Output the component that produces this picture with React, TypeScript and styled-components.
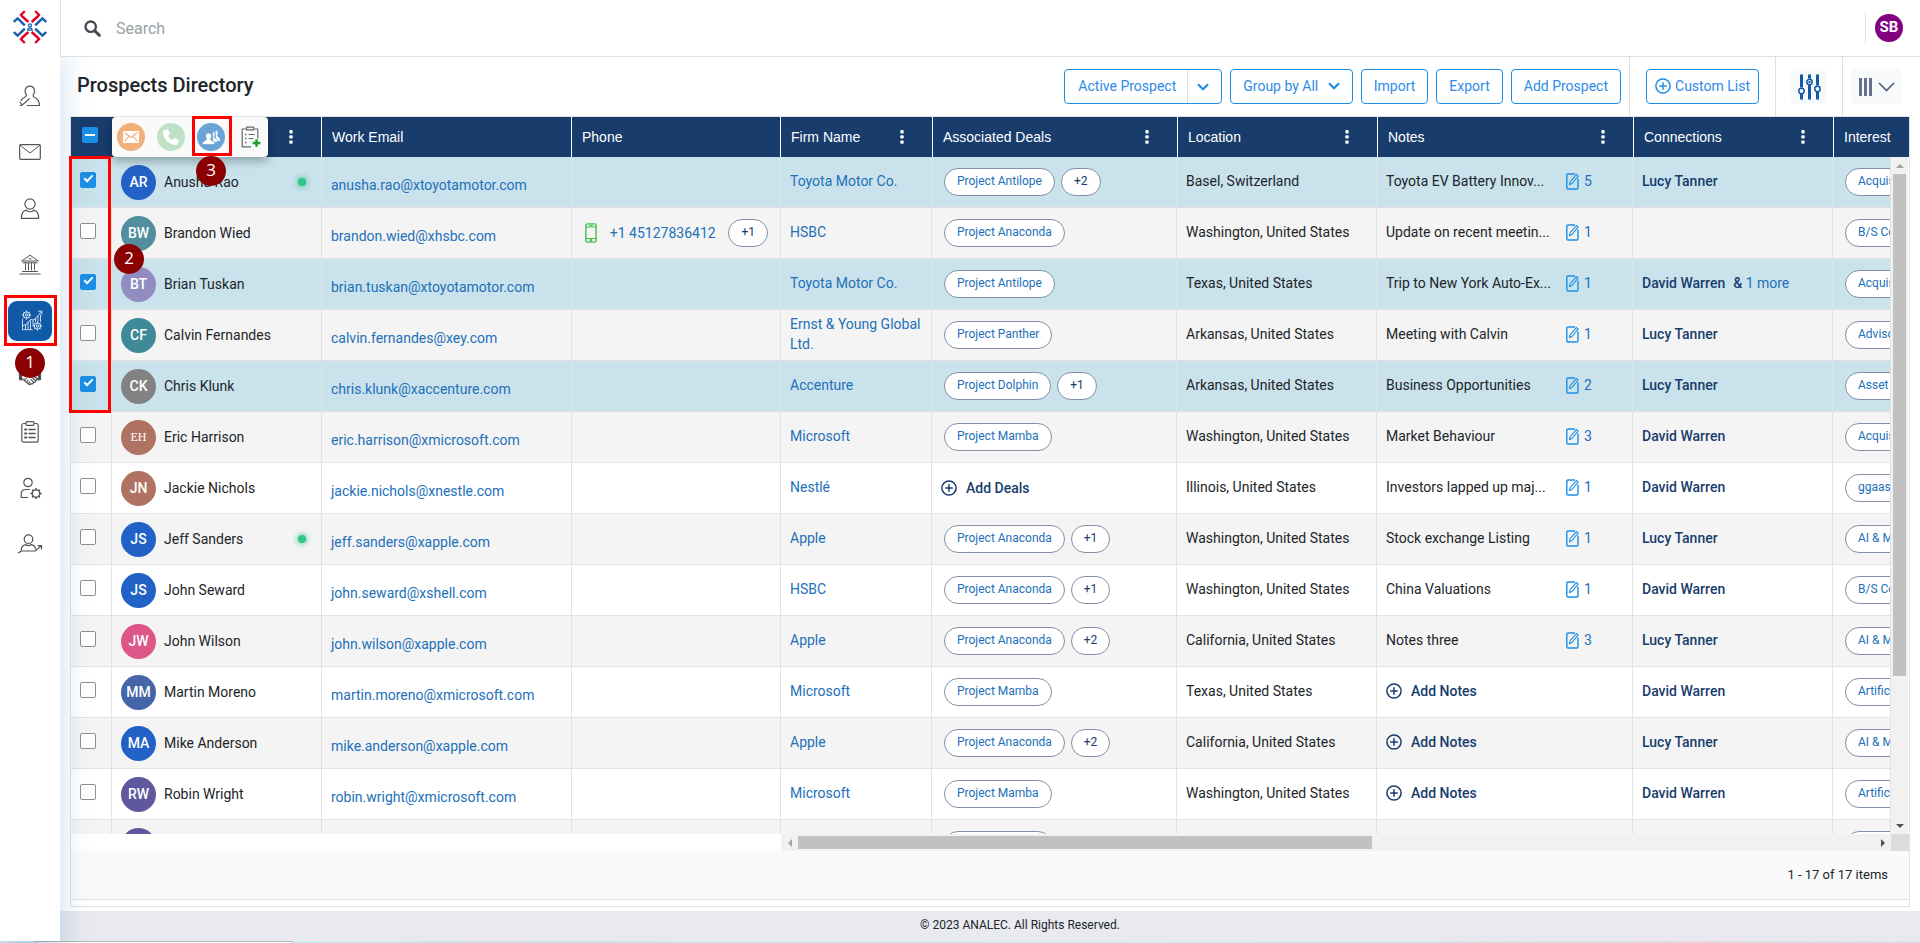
import React from "react";
import styled, { createGlobalStyle, css } from "styled-components";

const GlobalStyle = createGlobalStyle`
  *, *::before, *::after { box-sizing: border-box; }
  body {
    margin: 0;
    font-family: Roboto, "Liberation Sans", sans-serif;
    font-size: 14px;
    line-height: 20px;
    color: #212529;
    background: #fff;
  }
  button, input { font: inherit; color: inherit; margin: 0; }
  button { cursor: pointer; background: none; border: 0; padding: 0; }
  a { text-decoration: none; color: inherit; }
  svg { display: block; flex: none; }
`;

/* ---------- shell ---------- */

const Shell = styled.div`
  position: relative;
  display: flex;
  flex-direction: column;
  height: 100vh;
  overflow: hidden;
`;

const Body = styled.div`
  flex: 1;
  min-height: 0;
  display: flex;
`;

const Sidebar = styled.nav`
  position: relative;
  z-index: 2;
  flex: none;
  width: 60px;
  background: #fff;
  display: flex;
  flex-direction: column;
  align-items: center;
  box-shadow: 0 54px 32px rgba(60, 130, 190, 0.28);
`;

const Brand = styled.a`
  display: flex;
  align-items: center;
  justify-content: center;
  width: 60px;
  height: 54px;
`;

const NavList = styled.ul`
  list-style: none;
  margin: 0;
  padding: 14px 0 0;
  display: flex;
  flex-direction: column;
`;

const NavItem = styled.li`
  position: relative;
  height: 56px;
  display: flex;
  align-items: center;
  justify-content: center;
`;

const NavLink = styled.a<{ $active?: boolean }>`
  display: flex;
  align-items: center;
  justify-content: center;
  width: 44px;
  height: 40px;
  border-radius: 9px;
  ${(p) => p.$active && css`
    margin-top: 2px;
    padding: 0 0 2px 4px;
    background: #115aa8;
  `}
`;

const Content = styled.div`
  flex: 1;
  min-width: 0;
  display: flex;
  flex-direction: column;
`;

const TopBar = styled.header`
  position: relative;
  z-index: 3;
  flex: none;
  height: 57px;
  display: flex;
  align-items: center;
  justify-content: space-between;
  background: #fff;
  border-bottom: 1px solid #dcdfe4;
  border-left: 1px solid #dcdfe4;
  padding: 0 17px 0 23px;
`;

const SearchBox = styled.label`
  display: flex;
  align-items: center;
  gap: 15px;
  color: #495057;
`;

const SearchInput = styled.input`
  width: 400px;
  height: 40px;
  padding: 0;
  border: 0;
  outline: none;
  font-size: 16px;
  &::placeholder { color: #9aa0a6; opacity: 1; }
`;

const UserArea = styled.div`
  display: flex;
  align-items: center;
  height: 30px;
  padding-left: 9px;
  border-left: 1px solid #dcdfe4;
`;

const UserButton = styled.button`
  width: 28px;
  height: 28px;
  border-radius: 50%;
  background: #800080;
  color: #fff;
  font-size: 15px;
  font-weight: 700;
  line-height: 26px;
  padding-bottom: 2px;
`;

/* ---------- page toolbar ---------- */

const PageBar = styled.div`
  flex: none;
  display: flex;
  align-items: stretch;
  height: 59px;
  margin-left: 17px;
`;

const Title = styled.h1`
  flex: 1;
  margin: 0;
  font-size: 20px;
  font-weight: 500;
  line-height: 56px;
`;

const BarGroup = styled.div<{ $pad: string }>`
  display: flex;
  align-items: center;
  gap: 8px;
  padding: ${(p) => p.$pad};
  & + & { border-left: 1px solid #dcdfe4; }
`;

const OutlineButton = styled.button`
  display: flex;
  align-items: center;
  gap: 6px;
  height: 35px;
  padding: 0 12px 2px;
  border: 1px solid #1b8fe6;
  border-radius: 4px;
  color: #2e8be6;
  white-space: nowrap;
`;

const CustomListButton = styled(OutlineButton)`
  gap: 4px;
  padding: 0 8px 2px;
`;

const SplitButton = styled.div`
  display: flex;
  height: 35px;
  border: 1px solid #1b8fe6;
  border-radius: 4px;
  color: #2e8be6;
`;

const SplitMain = styled.button`
  padding: 0 11px 2px 13px;
  white-space: nowrap;
`;

const SplitArrow = styled.button`
  width: 34px;
  display: flex;
  align-items: center;
  justify-content: center;
  padding-right: 4px;
  border-left: 1px solid #dcdfe4;
`;

const SoftButton = styled.button<{ $w: number }>`
  display: flex;
  align-items: center;
  justify-content: center;
  gap: 6px;
  width: ${(p) => p.$w}px;
  height: 35px;
  border-radius: 4px;
  background: #f8f9fa;
`;

/* ---------- grid ---------- */

const GridPanel = styled.section`
  flex: 1;
  min-height: 0;
  display: flex;
  flex-direction: column;
  margin: 0 10px 4px;
  border: 1px solid #e3e3e3;
  padding-bottom: 6px;
`;

const GridArea = styled.div`
  flex: 1;
  min-height: 0;
  display: flex;
`;

const GridMain = styled.div`
  flex: 1;
  min-width: 0;
  display: flex;
  flex-direction: column;
`;

const TableClip = styled.div`
  flex: 1;
  min-height: 0;
  overflow: hidden;
`;

const Table = styled.table`
  width: 100%;
  table-layout: fixed;
  border-collapse: separate;
  border-spacing: 0;
`;

const HeadCell = styled.th<{ $side?: "left" | "right" | "none"; $flush?: boolean }>`
  height: 40px;
  padding: ${(p) => (p.$flush ? "0" : "0 24px 0 10px")};
  background: #183c6c;
  color: #fff;
  font-family: "Liberation Sans", Arial, sans-serif;
  font-weight: 400;
  text-align: left;
  white-space: nowrap;
  overflow: hidden;
  ${(p) => p.$side === "left" && css`border-left: 1px solid #fff;`}
  ${(p) => p.$side === "right" && css`border-right: 1px solid #fff;`}
`;

const BulkCell = styled(HeadCell)`
  position: relative;
  overflow: visible;
`;

const HeadInner = styled.div`
  display: flex;
  align-items: center;
  justify-content: space-between;
`;

const DotsButton = styled.button`
  width: 12px;
  height: 20px;
  display: flex;
  align-items: center;
  justify-content: center;
`;

const BulkHead = styled.div`
  display: flex;
  align-items: center;
  justify-content: space-between;
  padding-right: 24px;
`;

const BulkBar = styled.div`
  display: flex;
  align-items: center;
  gap: 12px;
  width: 156px;
  height: 40px;
  padding-left: 5px;
  background: #fafafa;
  border-radius: 4px;
  box-shadow: 0 4px 10px rgba(0, 0, 0, 0.3);
`;

const BulkButton = styled.button<{ $bg?: string }>`
  display: flex;
  align-items: center;
  justify-content: center;
  width: 28px;
  height: 28px;
  border-radius: 50%;
  background: ${(p) => p.$bg ?? "transparent"};
`;

const Row = styled.tr<{ $tone: "selected" | "gray" | "white" }>`
  background: ${(p) => ({ selected: "#c9e2eb", gray: "#f4f4f4", white: "#fff" })[p.$tone]};
`;

const Cell = styled.td`
  height: 51px;
  padding: 0 9px;
  border-right: 1px solid #e0e2e4;
  border-bottom: 1px solid #e0e2e4;
  overflow: hidden;
  white-space: nowrap;
`;

const CheckCell = styled(Cell)`
  padding: 0 0 4px 9px;
`;

const EmailCell = styled(Cell)`
  padding-top: 6px;
`;

const TextCell = styled(Cell)`
  padding-bottom: 2px;
`;

const FirmCell = styled(TextCell)`
  white-space: normal;
`;

const Checkbox = styled.input`
  appearance: none;
  display: block;
  position: relative;
  width: 16px;
  height: 16px;
  border: 1px solid #8f8f8f;
  border-radius: 2px;
  background: #fff;
  &:checked, &:indeterminate { background: #1b8fe6; border-color: #1b8fe6; }
  &:checked::after {
    content: "";
    position: absolute;
    left: 3px;
    top: 2px;
    width: 9px;
    height: 5px;
    border: solid #fff;
    border-width: 0 0 2px 2px;
    transform: rotate(-45deg);
  }
  &:indeterminate::after {
    content: "";
    position: absolute;
    left: 2px;
    top: 6px;
    width: 10px;
    height: 2px;
    background: #fff;
  }
`;

const HeadCheck = styled.div`
  padding: 0 0 4px 11px;
`;

const Person = styled.div`
  display: flex;
  align-items: center;
  gap: 8px;
  padding-right: 6px;
`;

const Avatar = styled.span<{ $bg: string; $serif?: boolean }>`
  flex: none;
  width: 35px;
  height: 35px;
  border-radius: 50%;
  background: ${(p) => p.$bg};
  color: #fff;
  text-align: center;
  line-height: 35px;
  font-weight: 500;
  ${(p) => p.$serif && css`font-family: "Liberation Serif", serif; font-size: 12px; font-weight: 400;`}
`;

const PersonName = styled.span`
  flex: 1;
`;

const Online = styled.i`
  width: 8px;
  height: 8px;
  border-radius: 50%;
  background: #33c48b;
  box-shadow: 0 0 4px 2px rgba(51, 196, 139, 0.5);
`;

const TextLink = styled.a`
  color: #2270b9;
`;

const Strong = styled.span`
  color: #183c6c;
  font-weight: 500;
`;

const Pills = styled.div`
  display: flex;
  align-items: center;
  gap: 6px;
  padding-left: 3px;
`;

const Pill = styled.a<{ $count?: boolean }>`
  flex: none;
  height: 28px;
  padding: 0 12px;
  border: 1px solid #8290a6;
  border-radius: 14px;
  background: #fff;
  color: ${(p) => (p.$count ? "#183c6c" : "#2270b9")};
  font-size: 12px;
  line-height: 24px;
`;

const PhoneLine = styled.div`
  display: flex;
  align-items: center;
  justify-content: space-between;
  padding: 0 3px 0 4px;
`;

const AddButton = styled.button`
  display: flex;
  align-items: center;
  gap: 9px;
  color: #183c6c;
  font-weight: 500;
`;

const NoteLine = styled.div`
  display: flex;
  align-items: center;
`;

const NoteText = styled.span`
  width: 180px;
`;

const NoteLink = styled(TextLink)`
  display: flex;
  align-items: center;
  gap: 5px;
`;

const More = styled.span`
  margin-left: 8px;
`;

/* ---------- scroll tracks ---------- */

const HScrollRow = styled.div`
  flex: none;
  display: flex;
  height: 17px;
  background: #fff;
`;

const LockedSpace = styled.div`
  flex: none;
  width: 710px;
`;

const HTrack = styled.div`
  flex: 1;
  display: flex;
  align-items: center;
  background: #f1f1f1;
`;

const HThumbLane = styled.div`
  flex: 1;
`;

const HThumb = styled.div`
  width: calc(100% * 8 / 15);
  height: 13px;
  background: #c1c1c1;
`;

const SideCol = styled.div`
  flex: none;
  width: 18px;
  display: flex;
  flex-direction: column;
`;

const SideHead = styled.div`
  flex: none;
  height: 40px;
  background: #183c6c;
`;

const VTrack = styled.div`
  flex: 1;
  width: 17px;
  display: flex;
  flex-direction: column;
  background: #f1f1f1;
`;

const VThumbLane = styled.div`
  flex: 1;
`;

const VThumb = styled.div`
  width: 13px;
  height: 78%;
  margin-left: 2px;
  background: #c1c1c1;
`;

const Corner = styled.div`
  flex: none;
  height: 17px;
  background: #dcdcdc;
`;

const ArrowBox = styled.div`
  flex: none;
  width: 17px;
  height: 17px;
  display: flex;
  align-items: center;
  justify-content: center;
`;

const Pager = styled.div`
  flex: none;
  display: flex;
  align-items: center;
  justify-content: flex-end;
  height: 49px;
  padding: 0 21px;
  background: #fafafa;
  border-bottom: 1px solid #e8dfe3;
  font-size: 13px;
`;

const Footer = styled.footer`
  flex: none;
  height: 30px;
  padding-left: 60px;
  background: #e9eaef;
  font-size: 12px;
  line-height: 28px;
  text-align: center;
`;

const BottomStrip = styled.div`
  flex: none;
  display: flex;
  height: 2px;
  background: linear-gradient(90deg, #dff0f3, #cdeeee 15%, #d3e0e8 25%, #d6eef0 60%, #d5e4e6 75%, #e6dbe0 88%, #d6e2ee);
`;

const StripTab = styled.div`
  width: 257px;
  margin-left: 36px;
  background: #fff;
  border: solid #b5b8bb;
  border-width: 1px 1px 0;
`;

/* ---------- walkthrough markers ---------- */

const Frame = styled.div<{ $x: number; $y: number; $w: number; $h: number }>`
  position: absolute;
  z-index: 4;
  left: ${(p) => p.$x}px;
  top: ${(p) => p.$y}px;
  width: ${(p) => p.$w}px;
  height: ${(p) => p.$h}px;
  border: 3px solid #f00;
  pointer-events: none;
`;

const Step = styled.div<{ $x: number; $y: number }>`
  position: absolute;
  z-index: 5;
  left: ${(p) => p.$x}px;
  top: ${(p) => p.$y}px;
  width: 30px;
  height: 30px;
  border-radius: 50%;
  background: #8b0000;
  color: #fff;
  font-family: "Open Sans", sans-serif;
  font-size: 17px;
  line-height: 28px;
  text-align: center;
`;

/* ---------- icons ---------- */

const Logo = () => (
  <svg width="34" height="34" viewBox="0 0 34 34" fill="none" strokeWidth="2.4">
    <g stroke="#e4002b">
      <path d="M11.800 1 8 4.800l1.600 2.400M8.800 6 15.400 12" />
      <path d="M22.200 1 26 4.800l-1.600 2.400M25.200 6 18.600 12" />
      <path d="M11.800 33 8 29.200l1.600-2.400M8.800 28 15.400 22" />
      <path d="M22.200 33 26 29.200l-1.600-2.400M25.200 28 18.600 22" />
    </g>
    <g stroke="#1660ad">
      <path d="M.8 12 4.600 8.400l7.200 7" />
      <path d="M33.200 12 29.400 8.400l-7.200 7" />
      <path d="M.8 22 4.600 25.600l7.200-7" />
      <path d="M33.200 22 29.400 25.600l-7.200-7" />
      <circle cx="17" cy="15.400" r="1.500" strokeWidth="1.300" />
      <path d="M14.700 20.200c.4-3.200 4.200-3.200 4.600 0z" strokeWidth="1.200" />
    </g>
  </svg>
);

const line = { fill: "none", stroke: "#555", strokeWidth: 1.2, strokeLinecap: "round", strokeLinejoin: "round" } as const;

const AdvisorIcon = () => (
  <svg width="22" height="22" viewBox="0 0 22 22" {...line}>
    <path d="M7.200 9.800C4.600 5.600 6.600 1.200 10.800 1.200s6.200 4.400 3.600 8.600c-.5.9-.3 1.700.7 2.200 3.400 1.600 5.200 3.300 5.400 8.500H8.200" />
    <path d="M7.200 9.800c.4 1.200-.4 2-1.400 2.500-1.600.8-2.900 1.700-3.800 3" />
    <path d="M1.200 17.200 3 20l2-1.400 5.200-4.800M1.200 20.500h1.300" />
  </svg>
);

const MailIcon = () => (
  <svg width="22" height="16" viewBox="0 0 22 16" {...line}>
    <rect x=".7" y=".7" width="20.600" height="14.600" rx="1" />
    <path d="m1.500 1.500 9.500 7.500 9.500-7.500" strokeWidth="1" />
  </svg>
);

const PersonIcon = () => (
  <svg width="20" height="21" viewBox="0 0 20 21" {...line}>
    <circle cx="10" cy="6" r="5.100" />
    <path d="M6.200 12.200c-3.200.6-4.800 3.400-4.900 8.100h17.400c-.1-4.700-1.700-7.500-4.900-8.100-2.200 2-5.400 2-7.600 0z" />
  </svg>
);

const BankIcon = () => (
  <svg width="22" height="21" viewBox="0 0 22 21" {...line} strokeWidth={1}>
    <path d="M3 6.800 11 1.200l8 5.600zM10 4.800h2M4 8.800h14M6.500 9v7M9.500 9v7M12.500 9v7M15.500 9v7M3.500 17.500h15M.8 20h20.400" />
  </svg>
);

const gear = "M0-4.200v1.200M0 3v1.200M-4.200 0h1.200M3 0h1.200M-3-3l.9.900M2.100 2.100l.9.900M-3 3l.9-.9M2.100-2.100 3-3";

const ProspectsIcon = () => (
  <svg width="22" height="22" viewBox="0 0 22 22" fill="none" stroke="#dce8f4" strokeWidth="1" strokeLinecap="round">
    <g transform="translate(5.500 6)"><circle r="3.200" /><circle r="1.200" /><path d={gear} /></g>
    <g transform="translate(16.500 17)"><circle r="3.200" /><circle r="1.200" /><path d={gear} /></g>
    <path d="M1.500 10.500v10.200h9.500M1.500 17l4-2 4-4.500 3.500.5 7.500-8.500M17.500 2.200h3.300v3M4.500 20v-4M7 20v-6.500M9.500 20v-8M12 17v-5.500M14.500 12.500v-3M17 12V7.500M19.500 12.500v-6.500" strokeWidth=".9" />
  </svg>
);

const HandshakeIcon = () => (
  <svg width="24" height="20" viewBox="0 0 24 20" fill="none" stroke="#555" strokeWidth="1.200" strokeLinecap="round" strokeLinejoin="round">
    <path d="M1.500 6.500 3.500 5.500v8.500l-2-.5zM22.500 6.500l-2-1v8.500l2-.5z" fill="#444" />
    <path d="M4 4h5l3-1 3 1h5M4 12.500 10.500 18c1 .9 2.300.6 2.500-.4M13 17.500c1.200.7 2.600 0 2.500-1.200 1.300.4 2.300-.5 2.100-1.600 1.300 0 1.800-1.200 1.200-2.200L14 8.500 11.500 10c-1.500.8-2.700-.8-1.800-2L12 5M20 12.500l-1.500 1.500M6.500 14l1.700-1.800M8.400 16l1.700-1.900M10.500 17.600l1.300-1.600M15.500 16l-2.500-2.400M17.500 14.500l-3-2.700" />
  </svg>
);

const ClipboardIcon = () => (
  <svg width="18" height="22" viewBox="0 0 18 22" {...line}>
    <rect x=".8" y="2.500" width="16.400" height="18.700" rx="2" />
    <rect x="5" y=".7" width="8" height="3.600" rx="1" fill="#fff" />
    <path d="M4 8.500h1.400M4 12.500h1.400M4 16.500h1.400" strokeWidth="1.800" />
    <path d="M8 8.500h6M8 12.500h6M8 16.500h6" strokeWidth="1.500" />
  </svg>
);

const PersonGearIcon = () => (
  <svg width="26" height="22" viewBox="-2 0 26 22" {...line}>
    <circle cx="9" cy="5.500" r="4.200" />
    <path d="M8.500 20.500H2.200V17c0-2.800 2-4.500 4.500-4.500h3.800" />
    <circle cx="17" cy="16.500" r="3.700" />
    <g transform="translate(17 16.500)" strokeWidth="1.800"><path d="M0-4.700v.6M0 4.100v.6M-4.700 0h.6M4.100 0h.6M-3.300-3.300l.4.400M2.900 2.900l.4.400M-3.300 3.300l.4-.4M2.900-2.900l.4-.4" /></g>
  </svg>
);

const PersonTrendIcon = () => (
  <svg width="26" height="20" viewBox="0 0 26 20" {...line}>
    <circle cx="11.500" cy="5.200" r="4.300" />
    <path d="M4.200 16.200c.2-3.300 1.800-5.200 4.500-5.600 1.700 1.300 3.900 1.300 5.600 0 2.400.4 3.800 1.700 4.300 4.200" />
    <path d="M1.500 18.800 4.500 17h13.700l5.800-5M21 11.600l3.500-.1v3.400" />
  </svg>
);

const SearchIcon = () => (
  <svg width="17" height="17" viewBox="0 0 17 17" fill="none" stroke="#434a50">
    <circle cx="6.700" cy="6.700" r="5.200" strokeWidth="2.400" />
    <path d="m10.600 10.600 4.700 4.700" strokeWidth="3" strokeLinecap="round" />
  </svg>
);

const ChevronIcon = () => (
  <svg width="12" height="8" viewBox="0 0 12 8" fill="none" stroke="#1b8fe6" strokeWidth="2.200">
    <path d="m1 1.200 5 5 5-5" />
  </svg>
);

const PlusCircle = ({ color = "#183c6c" }: { color?: string }) => (
  <svg width="16" height="16" viewBox="0 0 16 16" fill="none" stroke={color} strokeWidth="1.500">
    <circle cx="8" cy="8" r="7.100" />
    <path d="M8 4.200v7.600M4.200 8h7.600" />
  </svg>
);

const SlidersIcon = () => (
  <svg width="23" height="26" viewBox="0 0 23 26" fill="none" stroke="#115aa8">
    <path d="M3.500.5v13M3.500 20v5.500M11.500.5v4M11.500 11v14.500M19.500.5v11M19.500 18v7.500" strokeWidth="3" />
    <g strokeWidth="1.500"><circle cx="3.500" cy="17" r="2.700" /><circle cx="11.500" cy="8" r="2.700" /><circle cx="19.500" cy="15" r="2.700" /></g>
    <circle cx="11.500" cy="8" r=".8" fill="#115aa8" />
  </svg>
);

const ColumnsIcon = () => (
  <svg width="13" height="18" viewBox="0 0 13 18" fill="#66708f">
    <path d="M0 0h3v18H0zM5 0h3v18H5zM10 0h3v18h-3z" />
  </svg>
);

const WideChevron = () => (
  <svg width="17" height="10" viewBox="0 0 17 10" fill="none" stroke="#56607f" strokeWidth="1.700">
    <path d="m1 1 7.500 7.500L16 1" />
  </svg>
);

const Dots = () => (
  <svg width="4" height="14" viewBox="0 0 4 14" fill="#fff">
    <rect x=".3" y="0" width="3.400" height="3.400" rx="1" />
    <rect x=".3" y="5.200" width="3.400" height="3.400" rx="1" />
    <rect x=".3" y="10.400" width="3.400" height="3.400" rx="1" />
  </svg>
);

const BulkMail = () => (
  <svg width="16" height="12" viewBox="0 0 16 12" fill="#fff">
    <rect width="16" height="12" rx=".8" />
    <path d="m1.500 1.500 6.500 5 6.500-5M1.500 10.500 6 5.300M14.500 10.500 10 5.300" fill="none" stroke="#f0b077" strokeWidth="1.100" />
  </svg>
);

const BulkPhone = () => (
  <svg width="16" height="16" viewBox="0 0 16 16" fill="#fff">
    <path d="M3.900.3.900 1.400C.3 1.600 0 2.100 0 2.700 0 10 6 16 13.300 16c.6 0 1.100-.3 1.300-.9l1.100-3c.2-.5 0-1.100-.5-1.400l-3.400-1.600c-.5-.2-1-.1-1.300.3L9.200 11C7.300 10.100 5.800 8.600 5 6.800l1.600-1.300c.4-.3.5-.9.300-1.300L5.300.8C5 .3 4.400.1 3.900.3z" />
  </svg>
);

const BulkPeople = () => (
  <svg width="18" height="15" viewBox="0 0 18 15" fill="#fff">
    <path d="M13.500.5c2 0 2.700 1.700 2.200 3.600-.2.900-.8 1.400-.8 2 .1 1 2.800 1 3 3.600v1.200h-4z" />
    <path d="M10.600 1.400c2 0 2.900 1.700 2.400 3.700-.2.900-.7 1.400-.7 2 .1 1 2.900 1.200 3.100 3.700v1.500h-4.600z" stroke="#68a4d6" strokeWidth=".7" />
    <path d="M6.600 3c2.300 0 3.300 1.900 2.800 4.100-.2 1-.9 1.500-.9 2.200.1 1.200 4 1.300 4.200 4.300v1H.4v-1c.2-3 4.200-3.100 4.300-4.300 0-.7-.7-1.200-.9-2.200C3.300 4.900 4.300 3 6.600 3z" stroke="#68a4d6" strokeWidth=".7" />
  </svg>
);

const BulkTask = () => (
  <svg width="20" height="22" viewBox="0 0 20 22" fill="none" stroke="#66696d" strokeWidth="1.200">
    <path d="M5 3H1.200v17.800H10M13.500 3h3.300v9.500" />
    <path d="M5.500 1.200h7.200v2.600H5.500zM7.500 8.500h6M7.500 12.500h5" />
    <path d="M4 8.500h1.500M4 12.500h1.500M4 16.500h1.500" strokeWidth="1.600" />
    <path d="M15.500 13.200v7.600M11.700 17h7.600" stroke="#1f9d2d" strokeWidth="2.400" />
  </svg>
);

const MobileIcon = () => (
  <svg width="12" height="20" viewBox="0 0 12 20" fill="none" stroke="#45bf4b" strokeWidth="1.400">
    <rect x=".9" y=".9" width="10.200" height="18.200" rx="1.600" />
    <path d="M1 4h10M1 15.500h10M4 2.500h4" strokeWidth="1.200" />
    <circle cx="6" cy="17.300" r=".7" />
  </svg>
);

const NoteIcon = () => (
  <svg width="13" height="17" viewBox="0 0 13 17" fill="none" stroke="#1b8fe6" strokeWidth="1.400">
    <path d="M9 1H2C1.300 1 .8 1.500.8 2.200v12.600c0 .7.500 1.200 1.200 1.200h8.800c.7 0 1.200-.5 1.200-1.200V5.500" />
    <path d="m3.500 11.500.6-2.800L10.400 1.600l1.700 1.500-6.200 7.400z" strokeWidth="1.100" />
  </svg>
);

const Tri = ({ d, dark }: { d: string; dark?: boolean }) => (
  <svg width="8" height="8" viewBox="0 0 8 8" fill={dark ? "#505050" : "#a3a3a3"}>
    <path d={d} />
  </svg>
);

/* ---------- data ---------- */

type Prospect = {
  initials: string;
  name: string;
  color: string;
  email: string;
  firm: string;
  deal?: string;
  more?: string;
  location: string;
  note?: string;
  notes?: number;
  connection?: string;
  others?: string;
  interest: string;
  selected?: boolean;
  online?: boolean;
  phone?: string;
};

const prospects: Prospect[] = [
  { initials: "AR", name: "Anusha Rao", color: "#2262c6", email: "anusha.rao@xtoyotamotor.com", firm: "Toyota Motor Co.", deal: "Project Antilope", more: "+2", location: "Basel, Switzerland", note: "Toyota EV Battery Innov...", notes: 5, connection: "Lucy Tanner", interest: "Acquisition", selected: true, online: true },
  { initials: "BW", name: "Brandon Wied", color: "#528e9e", email: "brandon.wied@xhsbc.com", firm: "HSBC", deal: "Project Anaconda", location: "Washington, United States", note: "Update on recent meetin...", notes: 1, interest: "B/S Consulting", phone: "+1 45127836412" },
  { initials: "BT", name: "Brian Tuskan", color: "#918dc0", email: "brian.tuskan@xtoyotamotor.com", firm: "Toyota Motor Co.", deal: "Project Antilope", location: "Texas, United States", note: "Trip to New York Auto-Ex...", notes: 1, connection: "David Warren", others: "1 more", interest: "Acquisition", selected: true },
  { initials: "CF", name: "Calvin Fernandes", color: "#3e8a99", email: "calvin.fernandes@xey.com", firm: "Ernst & Young Global Ltd.", deal: "Project Panther", location: "Arkansas, United States", note: "Meeting with Calvin", notes: 1, connection: "Lucy Tanner", interest: "Advisory" },
  { initials: "CK", name: "Chris Klunk", color: "#828282", email: "chris.klunk@xaccenture.com", firm: "Accenture", deal: "Project Dolphin", more: "+1", location: "Arkansas, United States", note: "Business Opportunities", notes: 2, connection: "Lucy Tanner", interest: "Asset Management", selected: true },
  { initials: "EH", name: "Eric Harrison", color: "#b07262", email: "eric.harrison@xmicrosoft.com", firm: "Microsoft", deal: "Project Mamba", location: "Washington, United States", note: "Market Behaviour", notes: 3, connection: "David Warren", interest: "Acquisition" },
  { initials: "JN", name: "Jackie Nichols", color: "#b07262", email: "jackie.nichols@xnestle.com", firm: "Nestlé", location: "Illinois, United States", note: "Investors lapped up maj...", notes: 1, connection: "David Warren", interest: "ggaasss" },
  { initials: "JS", name: "Jeff Sanders", color: "#2262c6", email: "jeff.sanders@xapple.com", firm: "Apple", deal: "Project Anaconda", more: "+1", location: "Washington, United States", note: "Stock exchange Listing", notes: 1, connection: "Lucy Tanner", interest: "AI & ML", online: true },
  { initials: "JS", name: "John Seward", color: "#2262c6", email: "john.seward@xshell.com", firm: "HSBC", deal: "Project Anaconda", more: "+1", location: "Washington, United States", note: "China Valuations", notes: 1, connection: "David Warren", interest: "B/S Consulting" },
  { initials: "JW", name: "John Wilson", color: "#dc5688", email: "john.wilson@xapple.com", firm: "Apple", deal: "Project Anaconda", more: "+2", location: "California, United States", note: "Notes three", notes: 3, connection: "Lucy Tanner", interest: "AI & ML" },
  { initials: "MM", name: "Martin Moreno", color: "#4466a8", email: "martin.moreno@xmicrosoft.com", firm: "Microsoft", deal: "Project Mamba", location: "Texas, United States", connection: "David Warren", interest: "Artificial Intelligence" },
  { initials: "MA", name: "Mike Anderson", color: "#2262c6", email: "mike.anderson@xapple.com", firm: "Apple", deal: "Project Anaconda", more: "+2", location: "California, United States", connection: "Lucy Tanner", interest: "AI & ML" },
  { initials: "RW", name: "Robin Wright", color: "#5f589e", email: "robin.wright@xmicrosoft.com", firm: "Microsoft", deal: "Project Mamba", location: "Washington, United States", connection: "David Warren", interest: "Artificial Intelligence" },
  { initials: "", name: "", color: "#5f589e", email: "", firm: "", deal: "Project Mamba", location: "", note: "", connection: "", interest: "Artificial Intelligence" },
];

const columnWidths = [41, 210, 250, 209, 151, 245, 200, 256, 200];

const navItems = [
  { label: "Advisors", icon: <AdvisorIcon /> },
  { label: "Mail", icon: <MailIcon /> },
  { label: "Contacts", icon: <PersonIcon /> },
  { label: "Institutions", icon: <BankIcon /> },
  { label: "Prospects", icon: <ProspectsIcon />, active: true },
  { label: "Deals", icon: <HandshakeIcon /> },
  { label: "Tasks", icon: <ClipboardIcon /> },
  { label: "User settings", icon: <PersonGearIcon /> },
  { label: "Activity", icon: <PersonTrendIcon /> },
];

const ColumnMenu = ({ label }: { label: string }) => (
  <DotsButton aria-label={`${label} column menu`}>
    <Dots />
  </DotsButton>
);

const ProspectRow = ({ p, index }: { p: Prospect; index: number }) => (
  <Row $tone={p.selected ? "selected" : index % 2 ? "gray" : "white"}>
    <CheckCell>
      <Checkbox type="checkbox" defaultChecked={p.selected} aria-label={`Select ${p.name}`} />
    </CheckCell>
    <Cell>
      <Person>
        <Avatar $bg={p.color} $serif={p.initials === "EH"}>{p.initials}</Avatar>
        <PersonName>{p.name}</PersonName>
        {p.online && <Online />}
      </Person>
    </Cell>
    <EmailCell>
      <TextLink href={`mailto:${p.email}`}>{p.email}</TextLink>
    </EmailCell>
    <Cell>
      {p.phone && (
        <PhoneLine>
          <MobileIcon />
          <TextLink href="#phone">{p.phone}</TextLink>
          <Pill href="#phones" $count>+1</Pill>
        </PhoneLine>
      )}
    </Cell>
    <FirmCell>
      <TextLink href="#firm">{p.firm}</TextLink>
    </FirmCell>
    <Cell>
      {p.deal ? (
        <Pills>
          <Pill href="#deal">{p.deal}</Pill>
          {p.more && <Pill href="#deals" $count>{p.more}</Pill>}
        </Pills>
      ) : (
        <AddButton><PlusCircle />Add Deals</AddButton>
      )}
    </Cell>
    <TextCell>{p.location}</TextCell>
    <TextCell>
      {p.note === undefined ? (
        <AddButton><PlusCircle />Add Notes</AddButton>
      ) : (
        <NoteLine>
          <NoteText>{p.note}</NoteText>
          {p.notes && <NoteLink href="#notes"><NoteIcon />{p.notes}</NoteLink>}
        </NoteLine>
      )}
    </TextCell>
    <TextCell>
      <Strong>{p.connection}</Strong>
      {p.others && (
        <More>
          <Strong>&amp;</Strong> <TextLink href="#connections">{p.others}</TextLink>
        </More>
      )}
    </TextCell>
    <Cell>
      <Pills>
        <Pill href="#interest">{p.interest}</Pill>
      </Pills>
    </Cell>
  </Row>
);

export default function App() {
  const selectAll = React.useRef<HTMLInputElement>(null);
  React.useLayoutEffect(() => {
    if (selectAll.current) selectAll.current.indeterminate = true;
  }, []);

  return (
    <>
      <GlobalStyle />
      <Shell>
        <Body>
          <Sidebar>
            <Brand href="#home" aria-label="Home"><Logo /></Brand>
            <NavList>
              {navItems.map((n) => (
                <NavItem key={n.label}>
                  <NavLink href="#nav" aria-label={n.label} $active={n.active}>{n.icon}</NavLink>
                </NavItem>
              ))}
            </NavList>
          </Sidebar>
          <Content>
            <TopBar>
              <SearchBox>
                <SearchIcon />
                <SearchInput type="search" placeholder="Search" aria-label="Search" />
              </SearchBox>
              <UserArea><UserButton>SB</UserButton></UserArea>
            </TopBar>
            <PageBar>
              <Title>Prospects Directory</Title>
              <BarGroup $pad="0 8px 0 0">
                <SplitButton>
                  <SplitMain>Active Prospect</SplitMain>
                  <SplitArrow aria-label="Choose prospect status"><ChevronIcon /></SplitArrow>
                </SplitButton>
                <OutlineButton>Group by All&nbsp; <ChevronIcon /></OutlineButton>
                <OutlineButton>Import</OutlineButton>
                <OutlineButton>Export</OutlineButton>
                <OutlineButton>Add Prospect</OutlineButton>
              </BarGroup>
              <BarGroup $pad="0 16px">
                <CustomListButton>
                  <PlusCircle color="#1b8fe6" />Custom List
                </CustomListButton>
              </BarGroup>
              <BarGroup $pad="0 15px">
                <SoftButton $w={36} aria-label="Filters"><SlidersIcon /></SoftButton>
              </BarGroup>
              <BarGroup $pad="0 18px 0 8px">
                <SoftButton $w={51} aria-label="Columns"><ColumnsIcon /><WideChevron /></SoftButton>
              </BarGroup>
            </PageBar>
            <GridPanel>
              <GridArea>
                <GridMain>
                  <TableClip>
                    <Table>
                      <colgroup>
                        {columnWidths.map((w, i) => <col key={i} width={w} />)}
                        <col />
                      </colgroup>
                      <thead>
                        <tr>
                          <HeadCell $side="none" $flush>
                            <HeadCheck>
                              <Checkbox ref={selectAll} type="checkbox" aria-label="Select all" />
                            </HeadCheck>
                          </HeadCell>
                          <BulkCell $side="right" $flush>
                            <BulkHead>
                              <BulkBar>
                                <BulkButton $bg="#f0b077" aria-label="Email"><BulkMail /></BulkButton>
                                <BulkButton $bg="#bfe2c6" aria-label="Call"><BulkPhone /></BulkButton>
                                <BulkButton $bg="#68a4d6" aria-label="Connect"><BulkPeople /></BulkButton>
                                <BulkButton aria-label="Add task"><BulkTask /></BulkButton>
                              </BulkBar>
                              <ColumnMenu label="Name" />
                            </BulkHead>
                          </BulkCell>
                          <HeadCell $side="right">Work Email</HeadCell>
                          <HeadCell $side="right">Phone</HeadCell>
                          {["Firm Name", "Associated Deals", "Location", "Notes", "Connections"].map((label, i) => (
                            <HeadCell key={label} $side={i ? "left" : "none"}>
                              <HeadInner>{label}<ColumnMenu label={label} /></HeadInner>
                            </HeadCell>
                          ))}
                          <HeadCell $side="left">Interest</HeadCell>
                        </tr>
                      </thead>
                      <tbody>
                        {prospects.map((p, i) => <ProspectRow key={i} p={p} index={i} />)}
                      </tbody>
                    </Table>
                  </TableClip>
                  <HScrollRow>
                    <LockedSpace />
                    <HTrack>
                      <ArrowBox><Tri d="M6 0v8L2 4z" /></ArrowBox>
                      <HThumbLane><HThumb /></HThumbLane>
                      <ArrowBox><Tri dark d="M2 0v8l4-4z" /></ArrowBox>
                    </HTrack>
                  </HScrollRow>
                </GridMain>
                <SideCol>
                  <SideHead />
                  <VTrack>
                    <ArrowBox><Tri d="M0 6h8L4 2z" /></ArrowBox>
                    <VThumbLane><VThumb /></VThumbLane>
                    <ArrowBox><Tri dark d="M0 2h8L4 6z" /></ArrowBox>
                  </VTrack>
                  <Corner />
                </SideCol>
              </GridArea>
              <Pager>1 - 17 of 17 items</Pager>
            </GridPanel>
            <Footer>© 2023 ANALEC. All Rights Reserved.</Footer>
          </Content>
        </Body>
        <BottomStrip><StripTab /></BottomStrip>

        <Frame $x={4} $y={295} $w={53} $h={51} />
        <Frame $x={69} $y={156} $w={42} $h={257} />
        <Frame $x={192} $y={116} $w={40} $h={40} />
        <Step $x={15} $y={348}>1</Step>
        <Step $x={114} $y={244}>2</Step>
        <Step $x={196} $y={156}>3</Step>
      </Shell>
    </>
  );
}
